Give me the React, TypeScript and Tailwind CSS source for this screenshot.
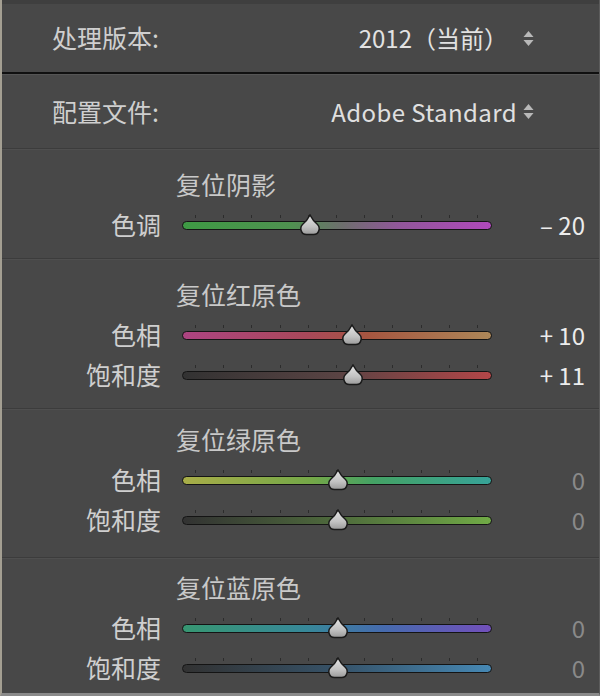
import React from "react"

const CJK = "font-['Noto_Sans_CJK_SC','Noto_Sans',sans-serif]"

type SliderRow = {
  label: string
  value: number
  track: string
}

type Section = {
  title: string
  pad: string
  rows: SliderRow[]
}

const SECTIONS: Section[] = [
  {
    title: "复位阴影",
    pad: "pt-[15px] pb-[13px]",
    rows: [
      {
        label: "色调",
        value: -20,
        track: "bg-[linear-gradient(to_right,#3e9a44,#4f9150_35%,#6e6e6e_52%,#91579a_70%,#b049bb)]",
      },
    ],
  },
  {
    title: "复位红原色",
    pad: "pt-[15px] pb-[13px]",
    rows: [
      {
        label: "色相",
        value: 10,
        track: "bg-[linear-gradient(to_right,#ad4482,#a9485a_40%,#a65640_60%,#ad8758)]",
      },
      {
        label: "饱和度",
        value: 11,
        track: "bg-[linear-gradient(to_right,#323232,#594343_50%,#b44648)]",
      },
    ],
  },
  {
    title: "复位绿原色",
    pad: "pt-[10px] pb-[17px]",
    rows: [
      {
        label: "色相",
        value: 0,
        track: "bg-[linear-gradient(to_right,#a8ad48,#74a848_42%,#44a265_62%,#37a398)]",
      },
      {
        label: "饱和度",
        value: 0,
        track: "bg-[linear-gradient(to_right,#323232,#4e6a3c_50%,#70aa46)]",
      },
    ],
  },
  {
    title: "复位蓝原色",
    pad: "pt-[9px] pb-[5px]",
    rows: [
      {
        label: "色相",
        value: 0,
        track: "bg-[linear-gradient(to_right,#379772,#378899_40%,#466bae_65%,#7250bb)]",
      },
      {
        label: "饱和度",
        value: 0,
        track: "bg-[linear-gradient(to_right,#323232,#365268_50%,#4688b4)]",
      },
    ],
  },
]

function UpDown() {
  return (
    <svg width="13" height="19" viewBox="0 0 13 19" className="shrink-0">
      <path d="M6.5 2 L11.5 8 H1.5 Z" fill="#b8b8b8" />
      <path d="M6.5 17 L11.5 11 H1.5 Z" fill="#b8b8b8" />
    </svg>
  )
}

function Thumb() {
  return (
    <svg width="24" height="22" viewBox="0 0 24 22">
      <defs>
        <linearGradient id="thumbFill" x1="0" y1="0" x2="0" y2="1">
          <stop offset="0" stopColor="#e4e4e4" />
          <stop offset="0.6" stopColor="#c2c2c2" />
          <stop offset="1" stopColor="#9a9a9a" />
        </linearGradient>
      </defs>
      <path
        d="M12 1 C13.5 4 16.5 8 19.5 10.5 C22.5 13 21.5 20.5 15.5 20.5 H8.5 C2.5 20.5 1.5 13 4.5 10.5 C7.5 8 10.5 4 12 1 Z"
        fill="url(#thumbFill)"
        stroke="#1a1a1a"
        strokeWidth="1.5"
      />
    </svg>
  )
}

function Slider({ value, track }: { value: number; track: string }) {
  const left = 156 + value * 1.4
  return (
    <div className="relative h-[22px] w-[310px]">
      <div className="absolute left-[13px] right-[14px] top-[1px] flex justify-between">
        {Array.from({ length: 11 }).map((_, i) => (
          <span key={i} className="h-[3px] w-px bg-[#2c2c2c]" />
        ))}
      </div>
      <div className={`absolute left-0 right-0 top-[7px] h-[9px] rounded-full border-[1.5px] border-[#141414] ${track}`} />
      <div className="absolute top-0" style={{ left: left - 12 }}>
        <Thumb />
      </div>
    </div>
  )
}

function formatValue(v: number) {
  if (v > 0) return `+ ${v}`
  if (v < 0) return `– ${Math.abs(v)}`
  return "0"
}

function Divider() {
  return (
    <div>
      <div className="h-px bg-[#3c3c3c]" />
      <div className="h-px bg-[#4f4f4f]" />
    </div>
  )
}

export default function App() {
  return (
    <div className={`h-[696px] w-[600px] overflow-hidden bg-[#484848] ${CJK}`}>
      <div className="flex h-full flex-col border-l-2 border-r border-b-[3px] border-l-[#a49f92] border-r-[#5c5c5c] border-b-[#8a8a8a]">
        <div className="h-[4px] bg-[#3f3f3f]" />
        {/* process version */}
        <div className="flex h-[68px] items-center justify-between pl-[50px] pr-[64px]">
          <span className="text-[25px] text-[#cfcfcf]">处理版本:</span>
          <span className="flex items-center gap-[14px] text-[24px] text-[#e2e2e2]">
            <span>2012（当前）</span>
            <UpDown />
          </span>
        </div>
        <div className="h-[2px] bg-[#101010]" />
        <div className="h-px bg-[#555555]" />
        {/* profile */}
        <div className="flex h-[73px] items-center justify-between pl-[50px] pr-[64px]">
          <span className="text-[25px] text-[#cfcfcf]">配置文件:</span>
          <span className="flex items-center gap-[5px] text-[24px] tracking-[0.4px] text-[#e0e0e0]">
            <span>Adobe Standard</span>
            <UpDown />
          </span>
        </div>

        {SECTIONS.map((s) => (
          <React.Fragment key={s.title}>
            <Divider />
            <div className={s.pad}>
              <div className="flex h-[40px] items-center pl-[174px] text-[25px] text-[#c9c9c9]">{s.title}</div>
              {s.rows.map((r, ri) => (
                <div key={ri} className="flex h-[40px] items-center">
                  <span className="w-[159px] text-right text-[25px] text-[#cfcfcf]">{r.label}</span>
                  <div className="ml-[21px]">
                    <Slider value={r.value} track={r.track} />
                  </div>
                  <span
                    className={`flex-1 pr-[14px] text-right text-[24px] ${
                      r.value === 0 ? "text-[#8a8a8a]" : "text-[#ececec]"
                    }`}
                  >
                    {formatValue(r.value)}
                  </span>
                </div>
              ))}
            </div>
          </React.Fragment>
        ))}
      </div>
    </div>
  )
}
